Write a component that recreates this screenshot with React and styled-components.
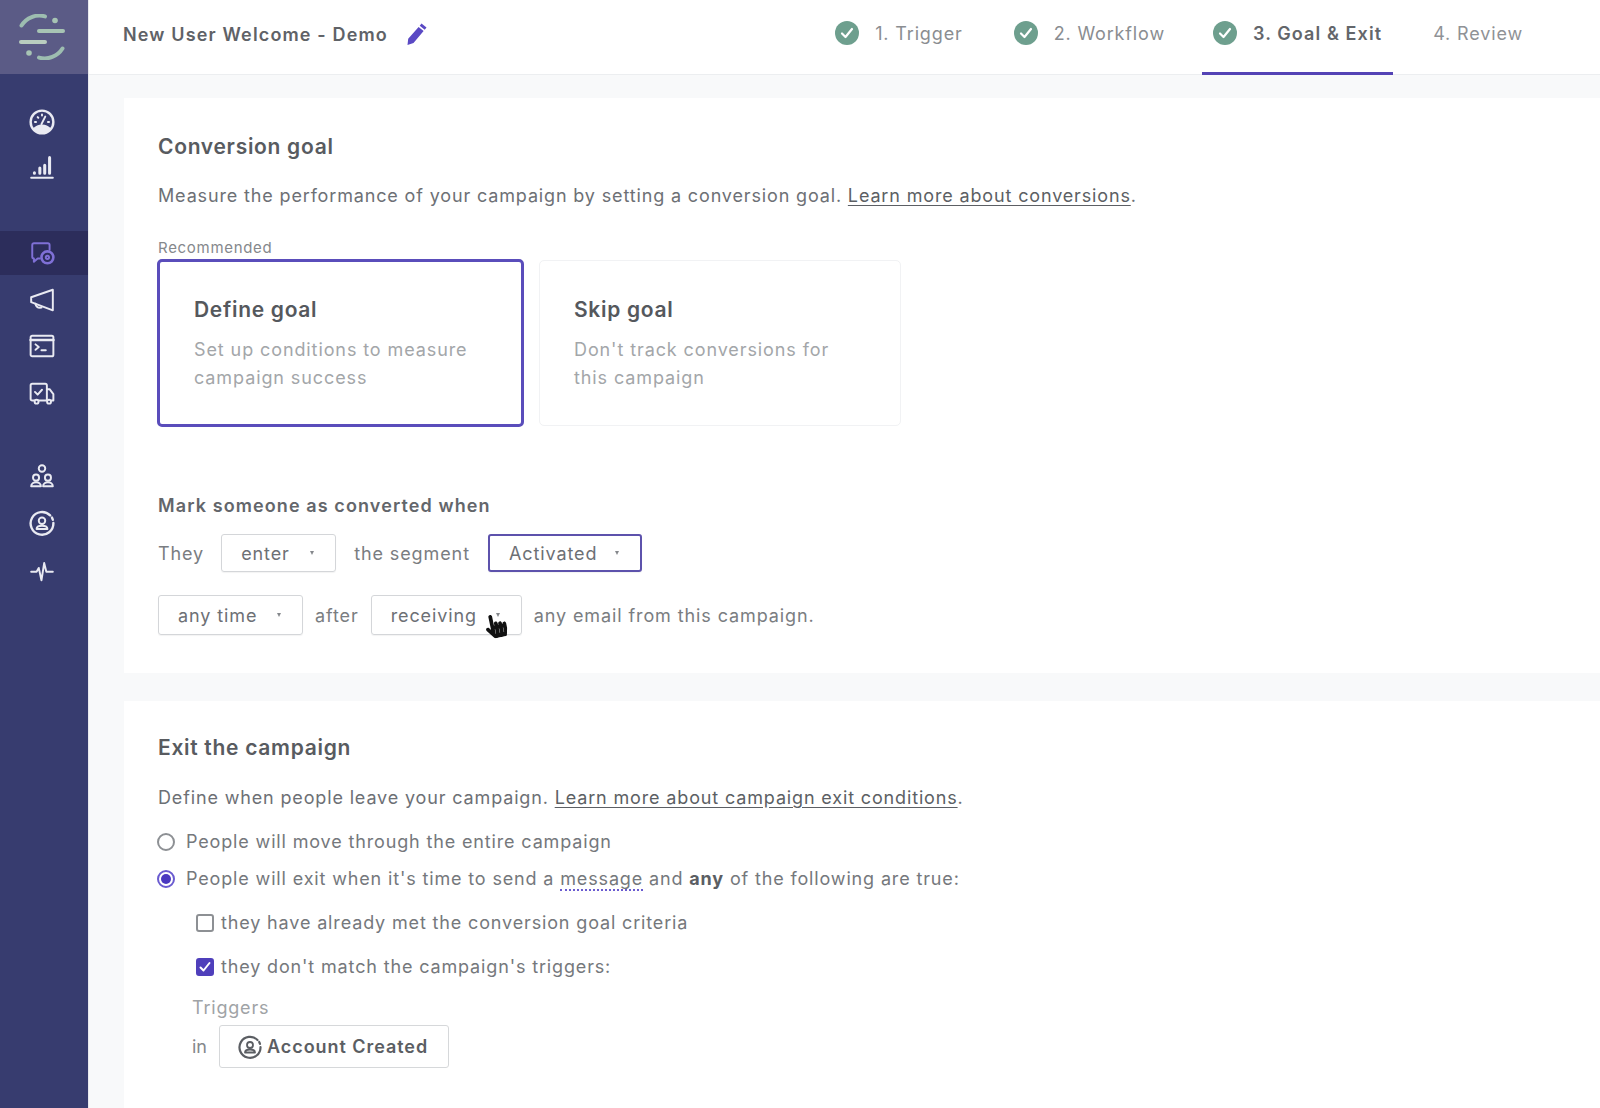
import React from "react";
import styled, { createGlobalStyle } from "styled-components";
import { FaHandPointer } from "react-icons/fa";

const GlobalStyle = createGlobalStyle`
  html, body {
    margin: 0;
    height: 1108px;
    overflow: hidden;
    background: #f8f9fa;
    font-family: Inter, "Noto Sans", sans-serif;
    color: #6d7075;
  }
  * { box-sizing: border-box; }
`;

const S = {
  App: styled.div`
    display: flex;
    height: 1108px;
  `,
  Sidebar: styled.nav`
    width: 89px;
    flex: none;
    background: #373c6f;
    border-right: 1px solid #e8e9ee;
  `,
  Logo: styled.div`
    height: 74px;
    background: #5b5b86;
    display: flex;
    align-items: center;
    justify-content: center;
    padding-right: 5px;
  `,
  NavGroup: styled.div`
    margin-top: ${props => props.$top}px;
    display: flex;
    flex-direction: column;
  `,
  NavItem: styled.div`
    height: 44px;
    margin: 1.25px 0;
    display: flex;
    align-items: center;
    justify-content: center;
    padding-right: 4px;
    color: ${props => (props.$active ? "#7f70d6" : "#e9eaf2")};
    background: ${props => (props.$active ? "#2c2d5b" : "transparent")};
  `,
  Content: styled.div`
    flex: 1;
    min-width: 0;
    display: flex;
    flex-direction: column;
  `,
  Header: styled.header`
    height: 75px;
    flex: none;
    display: flex;
    align-items: stretch;
    justify-content: space-between;
    background: #fff;
    border-bottom: 1px solid #eceef0;
    padding: 0 66px 0 34px;
  `,
  Title: styled.div`
    display: flex;
    align-items: center;
    gap: 18px;
    padding-bottom: 6px;
    font-size: 18px;
    font-weight: 600;
    color: #5f6267;
    letter-spacing: 1.15px;
  `,
  Pencil: styled.span`
    display: flex;
    color: #5a49c4;
  `,
  Steps: styled.div`
    display: flex;
    gap: 29px;
  `,
  Step: styled.div`
    display: flex;
    align-items: center;
    gap: 16px;
    padding: 0 11px 6px;
    margin: 0 0 -1px ${props => (props.$current ? -3 : 0)}px;
    font-size: 18px;
    font-weight: ${props => (props.$current ? 600 : 400)};
    color: ${props =>
      props.$current ? "#63666b" : props.$done ? "#8a8d91" : "#8f9296"};
    letter-spacing: ${props => (props.$current ? 1.1 : 0.85)}px;
    border-bottom: 3px solid
      ${props => (props.$current ? "#5443b5" : "transparent")};
  `,
  Main: styled.main`
    flex: 1;
    min-height: 0;
    display: flex;
    flex-direction: column;
    gap: 28px;
    padding: 23px 0 0 35px;
    background: #f8f9fa;
  `,
  Card: styled.section`
    position: relative;
    flex: ${props => (props.$grow ? 1 : "none")};
    background: #fff;
    padding: ${props => props.$top}px 34px 0;
    height: ${props => (props.$height ? `${props.$height}px` : "auto")};
  `,
  CardTitle: styled.h2`
    margin: 0;
    font-size: 21px;
    line-height: 30px;
    font-weight: 600;
    color: #585b60;
    letter-spacing: 0.7px;
  `,
  Text: styled.p`
    margin: ${props => props.$top || 0}px 0 0;
    font-size: 18px;
    line-height: 30px;
    color: #6d7075;
    letter-spacing: 0.85px;
  `,
  Link: styled.a`
    color: #5c5f64;
    text-decoration: underline;
    text-underline-offset: 3px;
  `,
  Small: styled.div`
    margin-top: 28px;
    font-size: 15px;
    line-height: 18px;
    color: #85888c;
    letter-spacing: 0.7px;
  `,
  Goals: styled.div`
    margin: 2px 0 0 -1px;
    display: flex;
    align-items: center;
    gap: 15px;
  `,
  Goal: styled.div`
    width: ${props => props.$width}px;
    height: ${props => (props.$selected ? 168 : 166)}px;
    padding: ${props => (props.$selected ? "34px" : "35px 34px")};
    border-radius: 5px;
    border: ${props =>
      props.$selected ? "3px solid #5a4dbb" : "1px solid #f1f2f4"};
  `,
  GoalTitle: styled.div`
    font-size: 21px;
    line-height: 28px;
    font-weight: 600;
    color: #55585d;
    letter-spacing: 0.7px;
  `,
  GoalText: styled.div`
    margin-top: 12px;
    font-size: 18px;
    line-height: 28px;
    color: #a3a6a9;
    letter-spacing: 0.9px;
  `,
  Label: styled.div`
    margin-top: 65px;
    font-size: 18px;
    line-height: 28px;
    font-weight: 600;
    color: #63666b;
    letter-spacing: 1.1px;
  `,
  Row: styled.div`
    margin-top: ${props => props.$top}px;
    display: flex;
    align-items: center;
    gap: 12px;
    font-size: 18px;
    color: #7a7d81;
    letter-spacing: 0.9px;
  `,
  Select: styled.div`
    width: ${props => props.$width}px;
    height: ${props => props.$height || 38}px;
    margin: 0 ${props => props.$gap || 0}px 0 ${props => props.$left || 0}px;
    padding: 0 0 0 19px;
    display: flex;
    align-items: center;
    justify-content: space-between;
    border-radius: 3px;
    border: ${props =>
      props.$focus ? "2px solid #5d52ac" : "1px solid #d4d6d9"};
    color: #6d7075;
    box-shadow: 0 1px 1px rgba(0, 0, 0, 0.05);
  `,
  Caret: styled.span`
    width: 0;
    height: 0;
    margin-right: 21px;
    border-left: 2.5px solid transparent;
    border-right: 2.5px solid transparent;
    border-top: 4px solid #85888c;
  `,
  Cursor: styled.span`
    position: absolute;
    left: 360px;
    top: 516px;
    display: flex;
    color: #111;
    transform: rotate(-12deg);
  `,
  Choice: styled.div`
    margin: ${props => props.$top}px 0 0 ${props => props.$left || 0}px;
    display: flex;
    align-items: center;
    gap: ${props => props.$gap}px;
    font-size: 18px;
    line-height: 28px;
    color: #75787c;
    letter-spacing: 0.85px;
  `,
  Radio: styled.span`
    width: 18px;
    height: 18px;
    margin-left: -1px;
    border-radius: 50%;
    flex: none;
    border: ${props =>
      props.$on ? "2px solid #6a5bd0" : "2px solid #8d9094"};
    padding: 2px;
    background: ${props => (props.$on ? "#4a38c0" : "#fff")};
    background-clip: content-box;
  `,
  Box: styled.span`
    width: 18px;
    height: 18px;
    flex: none;
    display: flex;
    align-items: center;
    justify-content: center;
    border-radius: 3px;
    border: 2px solid ${props => (props.$on ? "#4f3fbb" : "#8d9094")};
    background: ${props => (props.$on ? "#4f3fbb" : "#fff")};
    color: #fff;
  `,
  Dotted: styled.span`
    border-bottom: 2px dotted #6a5bd0;
  `,
  Strong: styled.b`
    font-weight: 700;
    color: #5b5e63;
  `,
  Triggers: styled.div`
    margin: 13px 0 0 34px;
    font-size: 18px;
    line-height: 28px;
    color: #a0a3a6;
    letter-spacing: 0.8px;
  `,
  TriggerRow: styled.div`
    margin: 3px 0 0 34px;
    display: flex;
    align-items: center;
    gap: 12px;
    font-size: 18px;
    color: #85888c;
  `,
  TriggerButton: styled.div`
    width: 230px;
    height: 43px;
    padding-left: 18px;
    display: flex;
    align-items: center;
    gap: 5px;
    border: 1px solid #d6d8da;
    border-radius: 3px;
    font-weight: 600;
    color: #5b5e63;
    letter-spacing: 0.95px;
  `
};

const Icon = ({ size = 26, children, ...props }) => (
  <svg
    width={size}
    height={size}
    viewBox="0 0 24 24"
    fill="none"
    stroke="currentColor"
    strokeWidth="1.8"
    strokeLinecap="round"
    strokeLinejoin="round"
    {...props}
  >
    {children}
  </svg>
);

const LogoMark = () => (
  <svg width="46" height="46" viewBox="0 0 46 46" fill="none">
    <g stroke="#9dbdb0" strokeWidth="4" strokeLinecap="round">
      <path d="M2.5 11.500A21 21 0 0 1 26 2.400" />
      <path d="M43.500 34.500A21 21 0 0 1 20 43.600" />
      <path d="M20 17h24" stroke="#a7c4b4" />
      <path d="M2 28h24" stroke="#b9cdbf" />
    </g>
    <circle cx="36" cy="6.500" r="2.800" fill="#a7c4b4" />
    <circle cx="10" cy="39" r="2.800" fill="#a7c4b4" />
  </svg>
);

const Gauge = () => (
  <Icon>
    <circle cx="12" cy="12" r="10.500" strokeWidth="2.200" />
    <path d="M4.500 18.500A10 10 0 0 0 19.500 18.500A10 10 0 0 0 4.500 18.500z" fill="currentColor" />
    <path d="M11.500 14l3.500-7M5.500 12h1M8 7.500l.6.6M18.500 12h-1M12 5v1" />
  </Icon>
);

const Bars = () => (
  <Icon>
    <path d="M2 20h20" />
    <path d="M5 15.500v.5M10 11V16M14.500 8.500V16M19 1.500V16" strokeWidth="2.800" />
  </Icon>
);

const Campaign = () => (
  <Icon>
    <path d="M19 9V4.500A1.500 1.500 0 0 0 17.500 3H4.500A1.500 1.500 0 0 0 3 4.500V15.500A1.500 1.500 0 0 0 4.500 17V20l3.500-3h2" />
    <circle cx="17" cy="16" r="5.500" strokeWidth="2.400" />
    <circle cx="17" cy="16" r="1.500" />
  </Icon>
);

const Megaphone = () => (
  <Icon>
    <path d="M22 2.500v19L2 14V9.500z" />
    <path d="M6 15.500c.5 3 2 4 5.500 3.500" />
  </Icon>
);

const Terminal = () => (
  <Icon>
    <rect x="1.500" y="2.500" width="21" height="19" rx="1.500" />
    <path d="M1.500 6.500h21" strokeWidth="2.400" />
    <path d="M6 10.500l3 2.500-3 2.500M11.500 16h4" />
  </Icon>
);

const Truck = () => (
  <Icon>
    <path d="M5 19H3a1.500 1.500 0 0 1-1.500-1.500V5A1.500 1.500 0 0 1 3 3.500h12A1.500 1.500 0 0 1 16.500 5v14H9" />
    <path d="M16.500 8.500H19l3.500 4.500v6H21" />
    <path d="M5.500 11l2.500 2.500 4-4.500" />
    <circle cx="7" cy="20" r="1.800" />
    <circle cx="18.500" cy="20" r="1.800" />
  </Icon>
);

const Audience = () => (
  <Icon>
    <circle cx="12" cy="5" r="3" />
    <circle cx="6.500" cy="13.500" r="2.800" />
    <circle cx="17.500" cy="13.500" r="2.800" />
    <path d="M2 21.500c0-5 9-5 9 0zM13 21.500c0-5 9-5 9 0z" />
  </Icon>
);

const PersonCircle = ({ size = 26 }) => (
  <Icon size={size}>
    <path d="M19.500 5A10.500 10.500 0 1 0 22.500 12" strokeWidth="2.200" />
    <path d="M22 9a10.500 10.500 0 0 0-.8-2" strokeWidth="2.200" />
    <circle cx="12" cy="10" r="3" />
    <path d="M7 17.500c0-4 10-4 10 0z" />
  </Icon>
);

const Pulse = () => (
  <Icon>
    <path d="M2 12.500h5l2-3.500 2.500 11.500L14 4.500l2 8h6" transform="translate(0 2)" />
  </Icon>
);

const StepCheck = () => (
  <svg width="24" height="24" viewBox="0 0 24 24">
    <circle cx="12" cy="12" r="12" fill="#6e9f8e" />
    <path
      d="M7 12.500l3.500 3.500L17 8"
      fill="none"
      stroke="#fff"
      strokeWidth="2.200"
      strokeLinecap="round"
      strokeLinejoin="round"
    />
  </svg>
);

const PencilIcon = () => (
  <svg width="22" height="24" viewBox="0 0 22 24" fill="currentColor">
    <path d="M15.500 1.500l5 4-1.800 2.300-5-4zM12.600 5l5 4L7.500 21l-6 2 .7-6.300z" />
  </svg>
);

const Check = () => (
  <svg width="12" height="12" viewBox="0 0 12 12" fill="none">
    <path
      d="M1.500 6.500l3 3L10.500 2"
      stroke="currentColor"
      strokeWidth="2"
      strokeLinecap="round"
      strokeLinejoin="round"
    />
  </svg>
);

const navGroups = [
  { top: 25, items: [<Gauge key="g" />, <Bars key="b" />] },
  {
    top: 38,
    items: [
      <Campaign key="c" />,
      <Megaphone key="m" />,
      <Terminal key="t" />,
      <Truck key="tr" />
    ]
  },
  { top: 37, items: [<Audience key="a" />, <PersonCircle key="p" />, <Pulse key="pu" />] }
];

const steps = [
  { label: "1. Trigger", done: true },
  { label: "2. Workflow", done: true },
  { label: "3. Goal & Exit", done: true, current: true },
  { label: "4. Review" }
];

const App = () => (
  <S.App>
    <GlobalStyle />
    <S.Sidebar>
      <S.Logo>
        <LogoMark />
      </S.Logo>
      {navGroups.map((group, i) => (
        <S.NavGroup key={i} $top={group.top}>
          {group.items.map((item, j) => (
            <S.NavItem key={j} $active={i === 1 && j === 0}>
              {item}
            </S.NavItem>
          ))}
        </S.NavGroup>
      ))}
    </S.Sidebar>
    <S.Content>
      <S.Header>
        <S.Title>
          New User Welcome - Demo
          <S.Pencil>
            <PencilIcon />
          </S.Pencil>
        </S.Title>
        <S.Steps>
          {steps.map(step => (
            <S.Step key={step.label} $current={step.current} $done={step.done}>
              {step.done && <StepCheck />}
              {step.label}
            </S.Step>
          ))}
        </S.Steps>
      </S.Header>
      <S.Main>
        <S.Card $height={575} $top={34}>
          <S.CardTitle>Conversion goal</S.CardTitle>
          <S.Text $top={19}>
            Measure the performance of your campaign by setting a conversion
            goal. <S.Link>Learn more about conversions</S.Link>.
          </S.Text>
          <S.Small>Recommended</S.Small>
          <S.Goals>
            <S.Goal $selected $width={367}>
              <S.GoalTitle>Define goal</S.GoalTitle>
              <S.GoalText>
                Set up conditions to measure
                <br />
                campaign success
              </S.GoalText>
            </S.Goal>
            <S.Goal $width={362}>
              <S.GoalTitle>Skip goal</S.GoalTitle>
              <S.GoalText>
                Don't track conversions for
                <br />
                this campaign
              </S.GoalText>
            </S.Goal>
          </S.Goals>
          <S.Label>Mark someone as converted when</S.Label>
          <S.Row $top={14}>
            They
            <S.Select $width={115} $left={5} $gap={6}>
              enter
              <S.Caret />
            </S.Select>
            the segment
            <S.Select $width={154} $left={6} $focus>
              Activated
              <S.Caret />
            </S.Select>
          </S.Row>
          <S.Row $top={23}>
            <S.Select $width={145} $height={40}>
              any time
              <S.Caret />
            </S.Select>
            after
            <S.Select $width={151} $height={40}>
              receiving
              <S.Caret />
            </S.Select>
            any email from this campaign.
          </S.Row>
          <S.Cursor>
            <FaHandPointer size={24} />
          </S.Cursor>
        </S.Card>
        <S.Card $grow $top={32}>
          <S.CardTitle>Exit the campaign</S.CardTitle>
          <S.Text $top={20}>
            Define when people leave your campaign.{" "}
            <S.Link>Learn more about campaign exit conditions</S.Link>.
          </S.Text>
          <S.Choice $top={15} $gap={11}>
            <S.Radio />
            People will move through the entire campaign
          </S.Choice>
          <S.Choice $top={9} $gap={11}>
            <S.Radio $on />
            <span>
              People will exit when it's time to send a{" "}
              <S.Dotted>message</S.Dotted> and <S.Strong>any</S.Strong> of the
              following are true:
            </span>
          </S.Choice>
          <S.Choice $top={16} $left={38} $gap={7}>
            <S.Box />
            they have already met the conversion goal criteria
          </S.Choice>
          <S.Choice $top={16} $left={38} $gap={7}>
            <S.Box $on>
              <Check />
            </S.Box>
            they don't match the campaign's triggers:
          </S.Choice>
          <S.Triggers>Triggers</S.Triggers>
          <S.TriggerRow>
            in
            <S.TriggerButton>
              <PersonCircle size={24} />
              Account Created
            </S.TriggerButton>
          </S.TriggerRow>
        </S.Card>
      </S.Main>
    </S.Content>
  </S.App>
);

export default App;
